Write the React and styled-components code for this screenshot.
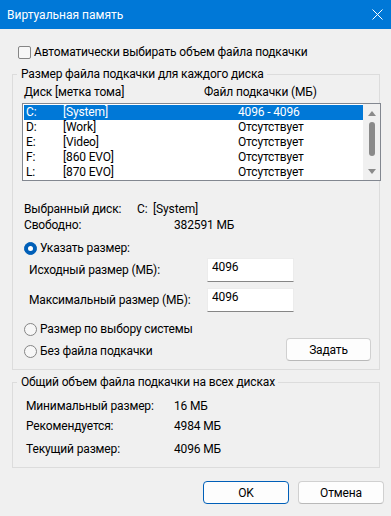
import React from 'react';
import styled, { createGlobalStyle } from 'styled-components';

const FONT = `Roboto, "Noto Sans", sans-serif`;

const Global = createGlobalStyle`
  html, body { margin: 0; padding: 0; background: #f0f0f0; }
  body { font-family: ${FONT}; font-size: 12px; line-height: 16px; letter-spacing: -0.15px; color: #000; }
  * { box-sizing: border-box; }
`;

const Window = styled.div`
  width: 391px;
  height: 516px;
  background: #f0f0f0;
  display: flex;
  flex-direction: column;
  overflow: hidden;
`;

const TitleBar = styled.div`
  flex: none;
  height: 29px;
  background: #0078d7;
  color: #fff;
  display: flex;
  align-items: center;
  justify-content: space-between;
  padding: 0 8px 0 7px;
  letter-spacing: 0;
`;

const Body = styled.div`
  padding: 0 7px 0 12px;
  display: flex;
  flex-direction: column;
`;

const CheckRow = styled.label`
  margin-top: 15px;
  padding-left: 6px;
  display: flex;
  align-items: center;
  gap: 3px;
  height: 16px;
`;

const CheckBox = styled.span`
  width: 13px;
  height: 13px;
  border: 1px solid #858585;
  border-radius: 2px;
  background: #f7f7f7;
  flex: none;
`;

const Group = styled.fieldset`
  margin: ${p => p.$mt}px 4px 0 0;
  padding: 0 0 ${p => p.$pb}px;
  border: 1px solid #dcdcdc;
  min-width: 0;
`;

const Legend = styled.legend`
  margin-left: 4px;
  padding: 0 3px 0 4px;
  line-height: 16px;
`;

const ListHeader = styled.div`
  padding: 2px 0 0 11px;
  display: grid;
  grid-template-columns: 180px 1fr;
`;

const ListBox = styled.div`
  margin: 3px -2px 0 9px;
  height: 78px;
  border: 1px solid #828790;
  background: #fff;
  display: flex;
`;

const Rows = styled.div`
  flex: 1;
  padding: 1px 0 0 1px;
`;

const Row = styled.div`
  height: 15px;
  line-height: 15px;
  padding-left: 2px;
  display: grid;
  grid-template-columns: 37px 175px 1fr;
  background: ${p => (p.$selected ? '#0078d7' : 'transparent')};
  color: ${p => (p.$selected ? '#fff' : '#000')};
`;

const ScrollBar = styled.div`
  width: 17px;
  flex: none;
  background: #f0f0f0;
  display: flex;
  flex-direction: column;
  align-items: center;
  padding-top: 7px;
`;

const Thumb = styled.div`
  margin-top: 6px;
  width: 6px;
  height: 34px;
  border-radius: 3px;
  background: #8a8a8a;
`;

const ArrowSvg = styled.svg`
  display: block;
  margin-top: ${p => p.$mt || 0}px;
`;

const InfoRow = styled.div`
  margin-top: ${p => p.$mt || 0}px;
  padding-left: 11px;
  display: flex;
  height: 16px;
`;

const InfoLabel = styled.span`
  width: ${p => p.$w}px;
  flex: none;
`;

const RadioRow = styled.label`
  margin-top: ${p => p.$mt || 0}px;
  padding-left: 11px;
  display: flex;
  align-items: center;
  gap: 3px;
  height: 16px;
`;

const Radio = styled.span`
  width: 13px;
  height: 13px;
  border-radius: 50%;
  flex: none;
  display: flex;
  align-items: center;
  justify-content: center;
  background: ${p => (p.$checked ? '#005fb8' : '#f7f7f7')};
  border: 1px solid ${p => (p.$checked ? '#005fb8' : '#858585')};
  &::after {
    content: '';
    display: ${p => (p.$checked ? 'block' : 'none')};
    width: 5px;
    height: 5px;
    border-radius: 50%;
    background: #fff;
  }
`;

const FieldRow = styled.div`
  margin-top: ${p => p.$mt}px;
  padding-left: 16px;
  display: flex;
  align-items: center;
`;

const FieldLabel = styled.span`
  width: 178px;
  flex: none;
`;

const Field = styled.input`
  width: 87px;
  height: 24px;
  padding: 1px 4px 7px;
  border: 1px solid #ececec;
  border-bottom-color: #868686;
  background: #fff;
  font: inherit;
  letter-spacing: inherit;
  line-height: 14px;
  color: #000;
  outline: none;
`;

const ActionRow = styled.div`
  margin-top: 1px;
  padding-left: 11px;
  padding-right: 8px;
  display: flex;
  align-items: center;
  justify-content: space-between;
  height: 23px;
`;

const RadioLabel = styled.label`
  display: flex;
  align-items: center;
  gap: 3px;
  padding-top: 3px;
`;

const Button = styled.button`
  width: ${p => p.$w || 86}px;
  height: 23px;
  padding: 0;
  border: 1px solid ${p => (p.$primary ? '#005fb8' : '#d0d0d0')};
  border-bottom-color: ${p => (p.$primary ? '#005fb8' : '#b9b9b9')};
  border-radius: 4px;
  background: #fdfdfd;
  font: inherit;
  letter-spacing: inherit;
  color: #000;
`;

const TotalsRow = styled.div`
  margin-top: ${p => p.$mt || 0}px;
  padding-left: 13px;
  display: flex;
  height: 16px;
`;

const Footer = styled.div`
  margin-top: 13px;
  display: flex;
  justify-content: flex-end;
  gap: 9px;
`;

const drives = [
  ['C:', '[System]', '4096 - 4096', true],
  ['D:', '[Work]', 'Отсутствует'],
  ['E:', '[Video]', 'Отсутствует'],
  ['F:', '[860 EVO]', 'Отсутствует'],
  ['L:', '[870 EVO]', 'Отсутствует'],
];

export default function App() {
  return (
    <Window>
      <Global />
      <TitleBar>
        <span>Виртуальная память</span>
        <svg width="11" height="11" viewBox="0 0 11 11">
          <path d="M0.5 0.5 L10.5 10.5 M10.5 0.5 L0.5 10.5" stroke="#fff" strokeWidth="1" />
        </svg>
      </TitleBar>
      <Body>
        <CheckRow>
          <CheckBox />
          Автоматически выбирать объем файла подкачки
        </CheckRow>

        <Group $mt={6} $pb={8}>
          <Legend>Размер файла подкачки для каждого диска</Legend>
          <ListHeader>
            <span>Диск [метка тома]</span>
            <span>Файл подкачки (МБ)</span>
          </ListHeader>
          <ListBox>
            <Rows>
              {drives.map(([d, l, s, sel]) => (
                <Row key={d} $selected={sel}>
                  <span>{d}</span>
                  <span>{l}</span>
                  <span>{s}</span>
                </Row>
              ))}
            </Rows>
            <ScrollBar>
              <ArrowSvg width="8" height="5" viewBox="0 0 8 5">
                <path d="M4 0 L8 5 L0 5 Z" fill="#8a8a8a" />
              </ArrowSvg>
              <Thumb />
              <ArrowSvg $mt={13} width="8" height="5" viewBox="0 0 8 5">
                <path d="M0 0 L8 0 L4 5 Z" fill="#8a8a8a" />
              </ArrowSvg>
            </ScrollBar>
          </ListBox>

          <InfoRow $mt={20}>
            <InfoLabel $w={113}>Выбранный диск:</InfoLabel>
            <span>C:&nbsp;&nbsp;[System]</span>
          </InfoRow>
          <InfoRow>
            <InfoLabel $w={150}>Свободно:</InfoLabel>
            <span>382591 МБ</span>
          </InfoRow>

          <RadioRow $mt={7}>
            <Radio $checked />
            Указать размер:
          </RadioRow>
          <FieldRow $mt={2}>
            <FieldLabel>Исходный размер (МБ):</FieldLabel>
            <Field readOnly value="4096" />
          </FieldRow>
          <FieldRow $mt={6}>
            <FieldLabel>Максимальный размер (МБ):</FieldLabel>
            <Field readOnly value="4096" />
          </FieldRow>

          <RadioRow $mt={9}>
            <Radio />
            Размер по выбору системы
          </RadioRow>
          <ActionRow>
            <RadioLabel>
              <Radio />
              Без файла подкачки
            </RadioLabel>
            <Button $w={85}>Задать</Button>
          </ActionRow>
        </Group>

        <Group $mt={4} $pb={10}>
          <Legend>Общий объем файла подкачки на всех дисках</Legend>
          <TotalsRow $mt={8}>
            <InfoLabel $w={148}>Минимальный размер:</InfoLabel>
            <span>16 МБ</span>
          </TotalsRow>
          <TotalsRow $mt={4}>
            <InfoLabel $w={148}>Рекомендуется:</InfoLabel>
            <span>4984 МБ</span>
          </TotalsRow>
          <TotalsRow $mt={7}>
            <InfoLabel $w={148}>Текущий размер:</InfoLabel>
            <span>4096 МБ</span>
          </TotalsRow>
        </Group>

        <Footer>
          <Button $primary>OK</Button>
          <Button>Отмена</Button>
        </Footer>
      </Body>
    </Window>
  );
}
